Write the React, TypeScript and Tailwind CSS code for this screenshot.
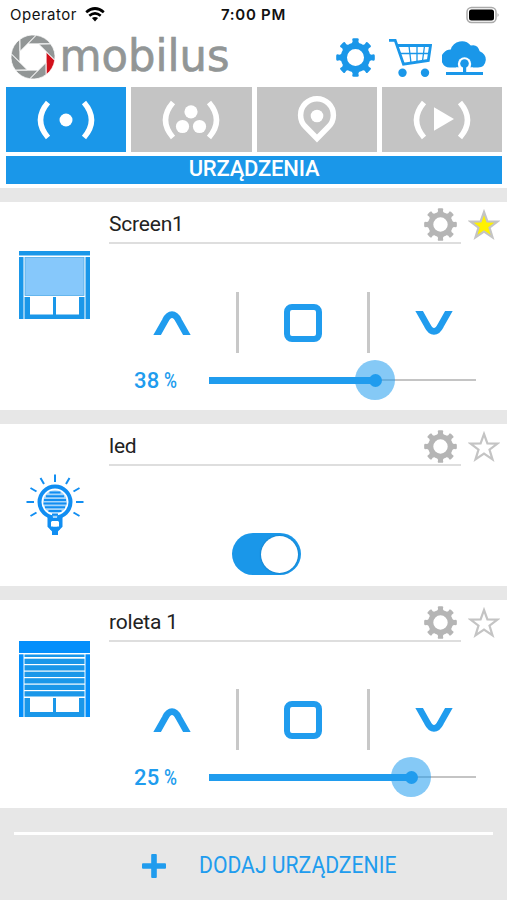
import React from "react";

const TEETH = [0, 45, 90, 135, 180, 225, 270, 315];

function Gear({ className }: { className: string }) {
  return (
    <svg viewBox="-19 -19 38 38" className={className} fill="currentColor">
      <circle r="11.3" fill="none" stroke="currentColor" strokeWidth="6" />
      {TEETH.map((a) => (
        <path key={a} transform={`rotate(${a})`} d="M-4.200-12.500L-2.800-15.500L-3.200-17.800Q-3-18.800-1.800-18.800H1.800Q3-18.800 3.200-17.800L2.800-15.500L4.200-12.500Z" />
      ))}
    </svg>
  );
}

function Star({ filled }: { filled?: boolean }) {
  return (
    <svg viewBox="0 0 32 32" className="h-8 w-8">
      <path
        d="M16 4L19.400 13.300L29.500 13.600L21.500 19.600L24.500 29.300L16 23.500L7.500 29.300L10.500 19.600L2.500 13.600L12.600 13.300Z"
        fill={filled ? "#fff200" : "#fff"}
        stroke="#c4c4c4"
        strokeWidth="2.200"
      />
    </svg>
  );
}

function StatusBar() {
  return (
    <div className="grid h-[30px] grid-cols-3 items-center pr-[7px] pl-[10px] font-['Inter',sans-serif] text-[15px] text-[#111]">
      <div className="flex items-center gap-2">
        <span className="tracking-[0.5px]">Operator</span>
        <svg viewBox="0 0 20 15" className="-mt-px h-[15px] w-5" fill="none" stroke="#000" strokeWidth="2.700">
          <path d="M1.200 5.200Q10-2.200 18.800 5.200" />
          <path d="M4.300 8.800Q10 4 15.700 8.800" />
          <path d="M6.900 11.100Q10 8.700 13.100 11.100L10 14.400Z" fill="#000" stroke="none" />
        </svg>
      </div>
      <div className="pr-[3px] text-center font-semibold tracking-[0.700px] whitespace-nowrap">7:00 PM</div>
      <svg viewBox="0 0 34 18" className="-mt-px h-[18px] w-[34px] justify-self-end">
        <rect x="1" y="1.500" width="29" height="15" rx="4.500" fill="#fff" stroke="#aaa" strokeWidth="1.500" />
        <rect x="3" y="3.500" width="25" height="11" rx="2.500" fill="#000" />
        <path d="M31.600 7Q33.500 9 31.600 11Z" fill="#999" />
      </svg>
    </div>
  );
}

function Logo() {
  return (
    <svg viewBox="0 0 220 50" className="h-[50px] w-[220px] overflow-visible">
      <g transform="translate(22 24)">
        {TEETH.map((a) => (
          <path
            key={a}
            transform={`rotate(${a})`}
            d="M13.200-5L21.700 3.300A22 22 0 0 1 13.200 17.600Z"
            fill={a === 0 ? "#d2101b" : "#929696"}
            stroke="#fff"
            strokeWidth="0.700"
          />
        ))}
      </g>
      <text x="48.500" y="37.500" fontFamily="DejaVu Sans" fontSize="44" fill="#929696" stroke="#929696" strokeWidth="0.700" textLength="170" lengthAdjust="spacingAndGlyphs">
        mobilus
      </text>
    </svg>
  );
}

function Header() {
  return (
    <header className="flex h-[57px] items-start pt-[3px] pl-[11px]">
      <Logo />
      <div className="ml-[105px] flex items-center pt-[4px] text-[#1a97e9]">
        <Gear className="h-[39px] w-[39px]" />
        <svg viewBox="0 0 44 40" className="ml-[13px] h-10 w-11" fill="none" stroke="currentColor">
          <path d="M1 3.300H7.200L15.500 27.200L40.300 23.500L42.500 8.500H9.500" strokeWidth="2.800" />
          <path d="M11.500 16.500H41M21 9L23 26M29 9V25M36.500 9L34.500 24" strokeWidth="1.300" />
          <circle cx="14.500" cy="35.700" r="4.200" fill="currentColor" stroke="none" />
          <circle cx="37" cy="35.700" r="4.200" fill="currentColor" stroke="none" />
        </svg>
        <svg viewBox="0 0 44 40" className="ml-[10px] h-10 w-11" fill="currentColor">
          <path d="M8.500 30.500A8.700 8.700 0 0 1 2 15.500Q4.300 12.500 8.800 12.500A11.500 11.500 0 0 1 28.800 8.600Q35.500 6.500 37.700 14.300Q44 17 43.800 23Q43 30.500 36 30.500Z" />
          <circle cx="22.500" cy="27" r="6.700" fill="#fff" />
          <rect x="14" y="30.500" width="17" height="4.500" fill="#fff" />
          <circle cx="22.500" cy="26.500" r="4.300" />
          <path d="M21 28H24.200V35H41V38H4V35H21Z" />
        </svg>
      </div>
    </header>
  );
}

function TabIcon({ kind }: { kind: string }) {
  if (kind === "place") {
    return (
      <svg viewBox="0 0 60 50" className="h-[50px] w-[60px]">
        <path d="M30 43.500L18.500 31.800A16.400 16.400 0 1 1 41.500 31.800Z" fill="none" stroke="#fff" strokeWidth="5.500" />
        <circle cx="30" cy="21" r="6.300" fill="#fff" />
      </svg>
    );
  }
  return (
    <svg viewBox="0 0 60 50" className="h-[50px] w-[60px]" fill="#fff">
      <path d="M12 7.500Q-3 25 12 42.500M48 7.500Q63 25 48 42.500" fill="none" stroke="#fff" strokeWidth="5.500" />
      {kind === "single" && <circle cx="30" cy="25" r="6.500" />}
      {kind === "group" && (
        <>
          <circle cx="30" cy="16.800" r="6.600" />
          <circle cx="21.500" cy="31.500" r="6.600" />
          <circle cx="38.500" cy="31.500" r="6.600" />
        </>
      )}
      {kind === "play" && <path d="M22 12.200L42 24L22 35.800Z" />}
    </svg>
  );
}

function Tabs() {
  return (
    <nav className="pr-[5px] pl-[6px]">
      <div className="grid grid-cols-4 gap-[5px]">
        {["single", "group", "place", "play"].map((k) => (
          <button key={k} className={`flex h-[65px] items-center justify-center ${k === "single" ? "bg-[#1a97e9]" : "bg-[#c4c4c4]"}`}>
            <TabIcon kind={k} />
          </button>
        ))}
      </div>
      <div className="mt-1 flex h-[28px] items-center justify-center bg-[#1a97e9] pb-[3px] text-[22px] font-medium tracking-[-0.200px] text-white">URZĄDZENIA</div>
    </nav>
  );
}

function ScreenIcon() {
  return (
    <svg viewBox="0 0 71 68" className="h-[68px] w-[71px]" fill="#1a97e9">
      <rect width="71" height="4.500" />
      <rect y="6" width="4.500" height="62" />
      <rect x="66.500" y="6" width="4.500" height="62" />
      <rect x="6" y="6.500" width="59" height="38" fill="#86c8fb" stroke="#4fabe9" strokeWidth="0.800" />
      <path d="M5.500 46H11V63.500H34V46H37V63.500H60V46H65.500V68H5.500Z" />
    </svg>
  );
}

function ShutterIcon() {
  return (
    <svg viewBox="0 0 71 76" className="h-[76px] w-[71px]" fill="#1a97e9">
      <rect width="71" height="12" fill="#048ffb" />
      <rect y="13.300" width="4.500" height="62.700" fill="#048ffb" />
      <rect x="66.500" y="13.300" width="4.500" height="62.700" fill="#048ffb" />
      <rect x="5.500" y="13.500" width="60" height="2.500" />
      {[17.700, 24.200, 30.700, 37.200, 43.700, 50.200].map((y) => (
        <rect key={y} x="5.500" y={y} width="60" height="5.300" />
      ))}
      <path d="M5.500 57H11V71H34V57H37V71H60V57H65.500V76H5.500Z" />
    </svg>
  );
}

function BulbIcon() {
  return (
    <svg viewBox="0 0 58 62" className="h-[62px] w-[58px]" fill="none" stroke="#118ef2">
      <path d="M23.500 42V52L28 56.500V59H30V56.500L34.500 52V42" strokeWidth="4" />
      <circle cx="29" cy="28" r="15.500" strokeWidth="4" fill="#fff" />
      <circle cx="29" cy="28" r="11.800" fill="#a6d5fa" stroke="none" />
      <path d="M26 37H32L31 44H27Z" fill="#a6d5fa" stroke="none" />
      <path d="M23.500 18.500H34.500M20 22.200H38M18 25.900H40M17.500 29.600H40.500M19 33.300H39M22.500 37H35.500M26 40.700H32" strokeWidth="2" />
      <path d="M24 45.500H34M24 54H34M27 57.500H31" strokeWidth="3" />
      <rect x="25" y="48" width="8" height="4.500" fill="#fff" stroke="none" />
      <path d="M29 0.500V8M14.500 4L18 10M43.500 4L40 10M4.500 14L10.500 17.500M53.500 14L47.500 17.500M0.500 28H8M50 28H57.500M4.500 42L10.500 38.500M53.500 42L47.500 38.500" strokeWidth="2" />
    </svg>
  );
}

function Chevron({ down }: { down?: boolean }) {
  return (
    <svg viewBox="0 0 38 24" className={`h-6 w-[38px] ${down ? "rotate-180" : ""}`}>
      <path d="M3 26L12.300 9.500Q15.200 3.600 19 3.600T25.700 9.500L35 26" fill="none" stroke="#209cee" strokeWidth="6.600" />
    </svg>
  );
}

function ShutterControls({ percent, knob }: { percent: number; knob: number }) {
  return (
    <>
      <div className="ml-px grid h-[61px] w-[393px] grid-cols-3 [&>*]:flex [&>*]:items-center [&>*]:justify-center [&>*]:border-r-3">
        <button className="border-[#c8c8c8]"><Chevron /></button>
        <button className="border-[#c8c8c8]"><span className="h-[38px] w-[38px] rounded-[8px] border-[6px] border-[#209cee]" /></button>
        <button className="border-transparent"><Chevron down /></button>
      </div>
      <div className="mt-[7px] flex h-10 items-center pl-[27px]">
        <span className="w-[75px] text-[22px] font-medium tracking-[0.300px] text-[#209cee]">{percent} <span className="-ml-px inline-block origin-left scale-x-80">%</span></span>
        <div className="relative flex h-10 w-[267px] items-center">
          <div className="h-[2px] w-full bg-[#c4c4c4]" />
          <div className="absolute left-0 h-[7px] bg-[#209cee]" style={{ width: knob }} />
          <div className="absolute flex h-10 w-10 items-center justify-center rounded-full bg-[#209cee]/55" style={{ left: knob - 20 }}>
            <span className="h-[13px] w-[13px] rounded-full bg-[#209cee]" />
          </div>
        </div>
      </div>
    </>
  );
}

function Card({ name, icon, iconClass, height, starred, children }: {
  name: string; icon: React.ReactNode; iconClass: string; height: string; starred?: boolean; children: React.ReactNode;
}) {
  return (
    <section className={`flex bg-white ${height}`}>
      <div className={`w-[107px] shrink-0 ${iconClass}`}>{icon}</div>
      <div className="flex-1">
        <div className="flex items-start pl-[2px]">
          <div className="flex h-[42px] w-[352px] items-center justify-between border-b-2 border-[#dedede]">
            <h2 className="pt-[6px] text-[21px] tracking-[-0.200px] text-[#222]">{name}</h2>
            <Gear className="mt-[5px] mr-[4px] h-[33px] w-[33px] text-[#b5b5b5]" />
          </div>
          <div className="mt-[6px] ml-[7px]"><Star filled={starred} /></div>
        </div>
        {children}
      </div>
    </section>
  );
}

export default function App() {
  return (
    <main className="h-[900px] w-[507px] overflow-hidden bg-[#e7e7e7] font-['Roboto',sans-serif]">
      <div className="h-[188px] bg-white">
        <StatusBar />
        <Header />
        <Tabs />
      </div>
      <div className="flex flex-col gap-[14px] pt-[14px]">
        <Card name="Screen1" height="h-[208px]" starred icon={<ScreenIcon />} iconClass="pt-[49px] pl-[19px]">
          <div className="pt-[48px]"><ShutterControls percent={38} knob={166} /></div>
        </Card>
        <Card name="led" height="h-[162px]" icon={<BulbIcon />} iconClass="pt-[50px] pl-[26px]">
          <button className="mt-[67px] ml-[125px] flex h-[42px] w-[69px] items-center justify-end rounded-full bg-[#1a97e9] pr-[3px]">
            <span className="h-[37px] w-[37px] rounded-full bg-white shadow-[0_0_2px_#0869ac]" />
          </button>
        </Card>
        <Card name="roleta 1" height="h-[208px]" icon={<ShutterIcon />} iconClass="pt-[41px] pl-[19px]">
          <div className="pt-[47px]"><ShutterControls percent={25} knob={202} /></div>
        </Card>
      </div>
      <footer className="mx-[14px] mt-6 border-t-[3px] border-white">
        <button className="flex items-center pt-[14px] pl-[128px] text-[#209cee]">
          <svg viewBox="0 0 24 24" className="h-6 w-6" fill="currentColor">
            <rect x="9.200" y="0" width="5.600" height="24" rx="1" />
            <rect x="0" y="9.200" width="24" height="5.600" rx="1" />
          </svg>
          <span className="ml-[33px] origin-left scale-x-92 text-[23px] whitespace-nowrap">DODAJ URZĄDZENIE</span>
        </button>
      </footer>
    </main>
  );
}
